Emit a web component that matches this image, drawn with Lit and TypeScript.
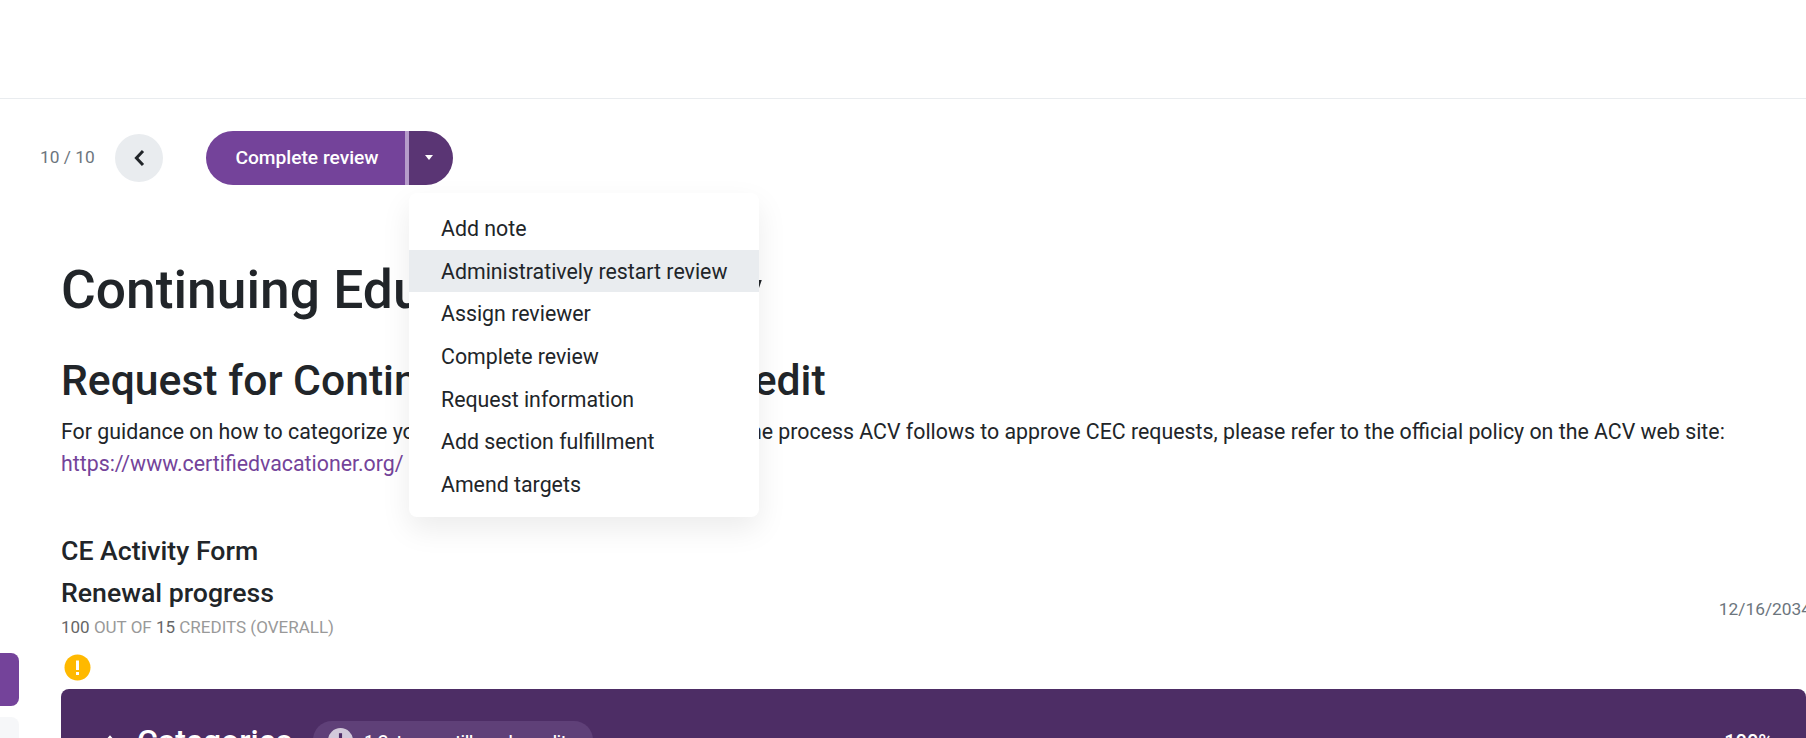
import { LitElement, html, css } from "lit";
import { customElement } from "lit/decorators.js";

const MENU = ["Add note", "Administratively restart review", "Assign reviewer", "Complete review", "Request information", "Add section fulfillment", "Amend targets"];

@customElement("app-root")
export class AppRoot extends LitElement {
  static styles = css`
    :host { display: block; position: relative; height: 738px; overflow: hidden; background: #fff; font-family: Roboto, "Liberation Sans", sans-serif; color: #212529; font-size: 21.33px; line-height: 1.5; }
    * { box-sizing: border-box; }
    .topbar { height: 99px; border-bottom: 1px solid #e9ecef; }
    .toolbar { display: flex; align-items: center; padding: 32px 0 0 40px; height: 86px; }
    .count { font-size: 17.33px; color: #6c757d; width: 75px; line-height: 24px; margin-top: -2px; }
    .back { width: 48px; height: 48px; border-radius: 50%; background: #e9ecef; display: flex; align-items: center; justify-content: center; margin-right: 43px; }
    .split { display: flex; height: 54px; position: relative; }
    .split-main { width: 203px; background: #74439a; color: #fff; font-size: 19.2px; font-weight: 500; display: flex; align-items: center; justify-content: center; border-radius: 27px 0 0 27px; border-right: 4px solid #b69cca; padding-left: 3px; }
    .split-caret { width: 44px; background: #5a3574; border-radius: 0 27px 27px 0; display: flex; align-items: center; justify-content: center; padding-right: 4px; }
    .caret { width: 0; height: 0; border-left: 4.5px solid transparent; border-right: 4.5px solid transparent; border-top: 5px solid #fff; margin-top: -1px; }
    .menu { position: absolute; left: 409px; top: 193px; width: 350px; background: #fff; border-radius: 8px; box-shadow: 0 12px 30px rgba(0,0,0,.08); padding: 14px 0 11px; z-index: 5; }
    .menu div { height: 42.67px; line-height: 42.67px; padding: 1px 32px 0; white-space: nowrap; }
    .menu .active { background: #e9ecef; }
    .content { padding: 0 0 0 61px; width: 1811px; }
    h1 { margin: 73px 0 0; font-size: 53.33px; font-weight: 500; line-height: 64px; white-space: nowrap; }
    h2 { margin: 33px 0 0; font-size: 42.67px; font-weight: 500; line-height: 51px; white-space: nowrap; }
    .intro { margin: 10px 0 0; line-height: 32px; width: 1700px; }
    .intro a { color: #74439a; text-decoration: none; }
    h4 { margin: 55px 0 0; font-size: 26.67px; font-weight: 500; line-height: 32px; }
    .progress-head { display: flex; justify-content: space-between; margin-top: 10px; }
    h4.renew { margin: 0; }
    .credits { font-size: 17px; color: #999; line-height: 26px; margin-top: 5px; text-transform: uppercase; }
    .credits b { font-weight: 400; color: #666; }
    .date { font-size: 17.33px; color: #6c757d; margin-top: 19px; line-height: 26px; }
    .warn { display: block; margin: 14px 0 0 3px; }
    .panel { margin-top: 8px; width: 1745px; height: 120px; background: #4d2d65; border-radius: 8px; color: #fff; display: flex; align-items: flex-start; padding: 32px 33px 0 39px; }
    .chev { margin: 12px 17px 0 0; flex: none; }
    .panel-title { font-size: 32px; font-weight: 500; line-height: 38px; margin-top: 1px; }
    .pill { margin: 0 0 0 21px; height: 38px; border-radius: 19px; background: #5f4078; display: flex; align-items: center; padding: 0 18px 0 15px; font-size: 16.2px; font-weight: 500; gap: 11px; }
    .pill svg { flex: none; }
    .pill span { margin-top: 5px; }
    .pct { margin-left: auto; font-size: 20px; font-weight: 500; margin-top: 9px; line-height: 24px; }
    .tab { position: absolute; left: 0; width: 19px; border-radius: 0 8px 8px 0; }
    .tab.one { top: 653px; height: 53px; background: #74439a; }
    .tab.two { top: 717px; height: 60px; background: #f6f7f9; }
  `;

  render() {
    return html`
      <div class="topbar"></div>
      <div class="toolbar">
        <span class="count">10 / 10</span>
        <span class="back"><svg width="12" height="18" viewBox="0 0 12 18"><path d="M10 2 3.4 9l6.6 7" fill="none" stroke="#212529" stroke-width="3"/></svg></span>
        <div class="split">
          <div class="split-main">Complete review</div>
          <div class="split-caret"><span class="caret"></span></div>
        </div>
      </div>
      <div class="menu">
        ${MENU.map((m, i) => html`<div class=${i === 1 ? "active" : ""}>${m}</div>`)}
      </div>
      <div class="content">
        <h1>Continuing Education Activity</h1>
        <h2>Request for Continuing Education Credit</h2>
        <p class="intro">For guidance on how to categorize your continuing education credit and the process ACV follows to approve CEC requests, please refer to the official policy on the ACV web site: <a href="#">https://www.certifiedvacationer.org/</a></p>
        <h4>CE Activity Form</h4>
        <div class="progress-head">
          <div>
            <h4 class="renew">Renewal progress</h4>
            <div class="credits"><b>100</b> out of <b>15</b> credits (overall)</div>
          </div>
          <div class="date">12/16/2034</div>
        </div>
        <svg class="warn" width="27" height="27" viewBox="0 0 27 27"><circle cx="13.5" cy="13.5" r="13" fill="#ffb900"/><rect x="12" y="6.5" width="3" height="9.5" fill="#fff"/><rect x="12" y="18" width="3" height="3" fill="#fff"/></svg>
        <div class="panel">
          <svg class="chev" width="20" height="14" viewBox="0 0 20 14"><path d="M4 11 10 4l6 7" fill="none" stroke="#fff" stroke-width="2.4"/></svg>
          <span class="panel-title">Categories</span>
          <span class="pill"><svg width="25" height="25" viewBox="0 0 24 24"><circle cx="12" cy="12" r="12" fill="#d2c9da"/><rect x="10.5" y="5" width="3" height="9" fill="#4d2d65"/><rect x="10.5" y="16" width="3" height="3" fill="#4d2d65"/></svg><span>1 Category still needs credits</span></span>
          <span class="pct">100%</span>
        </div>
      </div>
      <div class="tab one"></div>
      <div class="tab two"></div>
    `;
  }
}
